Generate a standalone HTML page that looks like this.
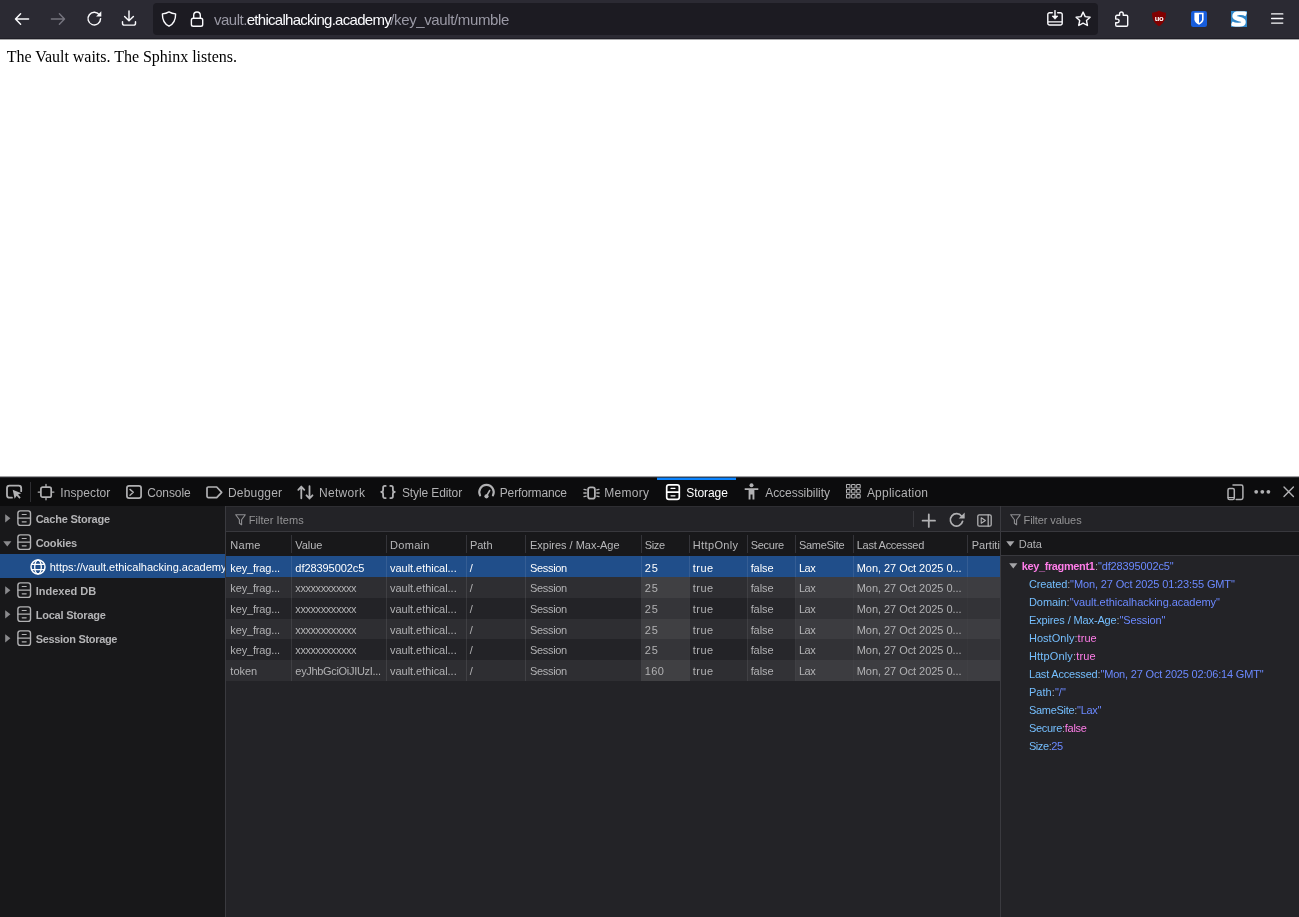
<!DOCTYPE html>
<html lang="en"><head><meta charset="utf-8"><title>key_vault</title>
<style>
html,body{margin:0;padding:0}
body{width:1299px;height:917px;position:relative;overflow:hidden;background:#fff;font-family:"Liberation Sans",sans-serif}
.a{position:absolute}
svg{position:absolute;overflow:visible}
#texts{position:absolute;left:0;top:0;width:1299px;height:917px;will-change:transform}
#texts .t{position:absolute;white-space:pre;font-family:"Liberation Sans",sans-serif}
#chrome{left:0;top:0;width:1299px;height:39px;background:#2b2a33}
#chromeline{left:0;top:38px;width:1299px;height:1px;background:#1f1e26}
#urlbar{left:153px;top:3px;width:945px;height:32px;background:#1c1b22;border-radius:4px}
#dt{left:0;top:476px;width:1299px;height:441px;background:#232327}
#dttop{left:0;top:476px;width:1299px;height:1px;background:#a0a0a2}
#dttop2{left:0;top:477px;width:1299px;height:1px;background:#29292c}
#chromeline2{left:0;top:39px;width:1299px;height:1px;background:#a8a8aa}
#tabs{left:0;top:477px;width:1299px;height:29px;background:#0c0c0d}
#tabline{left:226px;top:506px;width:1073px;height:1px;background:#2e2e32}
#tabhl{left:657px;top:478px;width:78.5px;height:2px;background:#0a84ff}
#tabhl2{left:657px;top:477px;width:78.5px;height:1px;background:#0a84ff;opacity:.35}
#tree{left:0;top:506px;width:225px;height:411px;background:#18181a}
#treesel{left:0;top:554px;width:225px;height:24px;background:#204e8a}
.vsplit{top:506px;width:1px;height:411px;background:#3a3a3f}
.hline{height:1px;background:#38383d}
#thead{left:226px;top:532px;width:774px;height:24px;background:#18181a}
#dhead{left:1001px;top:532px;width:298px;height:23px;background:#161618}
.row{left:226px;width:774px}
.zeb{background:rgba(255,255,255,.05)}
.sel{background:#204e8a}
.ro{background:rgba(255,255,255,.085)}
.csep{width:1px;background:rgba(255,255,255,.09)}
.hsep{width:1px;background:#343439;top:535px;height:18px}

</style></head>
<body>
<div class="a" id="chrome"></div><div class="a" id="chromeline"></div><div class="a" id="urlbar"></div>
<svg style="left:14px;top:10.75px;" width="16" height="16" viewBox="0 0 16 16"><path d="M14.6 8H1.6M6.6 2.8L1.5 8l5.1 5.2" fill="none" stroke="#fbfbfe" stroke-width="1.45" stroke-linecap="round" stroke-linejoin="round"/></svg>
<svg style="left:49.6px;top:10.75px;" width="16" height="16" viewBox="0 0 16 16"><path d="M1.4 8h13M9.4 2.8L14.5 8l-5.1 5.2" fill="none" stroke="#75747e" stroke-width="1.45" stroke-linecap="round" stroke-linejoin="round"/></svg>
<svg style="left:86px;top:10.2px;" width="16" height="16" viewBox="0 0 16 16"><path d="M13.6 5.2A6.3 6.3 0 1 0 14.6 8.6" fill="none" stroke="#fbfbfe" stroke-width="1.45" stroke-linecap="round" stroke-linejoin="round"/><path d="M15.3 1.2v5.2h-5.2z" fill="#fbfbfe"/></svg>
<svg style="left:121.3px;top:10.3px;" width="16" height="16" viewBox="0 0 16 16"><path d="M8 1v9.6M3.6 6.4L8 10.8l4.4-4.400" fill="none" stroke="#fbfbfe" stroke-width="1.45" stroke-linecap="round" stroke-linejoin="round"/><path d="M1.5 11.8v1.4a1.9 1.9 0 0 0 1.9 1.900h9.2a1.900 1.900 0 0 0 1.900-1.900v-1.400" fill="none" stroke="#fbfbfe" stroke-width="1.45" stroke-linecap="round" stroke-linejoin="round"/></svg>
<svg style="left:161.3px;top:10.8px;" width="16" height="16" viewBox="0 0 16 16"><path d="M8 0.900C10.300 2.200 12.300 2.700 14.600 2.900C14.700 8.500 12.900 12.700 8 15.200C3.100 12.700 1.300 8.500 1.400 2.900C3.700 2.700 5.700 2.200 8 0.900z" fill="none" stroke="#fbfbfe" stroke-width="1.4" stroke-linecap="round" stroke-linejoin="round"/></svg>
<svg style="left:189px;top:10.5px;" width="16" height="16" viewBox="0 0 16 16"><rect x="2.400" y="7.300" width="11.300" height="8" rx="1.800" fill="none" stroke="#fbfbfe" stroke-width="1.4" stroke-linecap="round" stroke-linejoin="round"/><path d="M4.700 7.200V4.300a3.300 3.300 0 0 1 6.600 0v2.900" fill="none" stroke="#fbfbfe" stroke-width="1.4" stroke-linecap="round" stroke-linejoin="round"/></svg>
<svg style="left:1047px;top:10.4px;" width="16" height="16" viewBox="0 0 16 16"><path d="M5.300 2.700H2.600A1.800 1.800 0 0 0 .8 4.500v8.700A1.800 1.800 0 0 0 2.600 15h10.800a1.800 1.800 0 0 0 1.800-1.800V4.500a1.800 1.800 0 0 0-1.800-1.800h-2.700M.8 11.900h14.400" fill="none" stroke="#fbfbfe" stroke-width="1.4" stroke-linecap="round" stroke-linejoin="round"/><path d="M8 .6v6.200" fill="none" stroke="#fbfbfe" stroke-width="1.4" stroke-linecap="round" stroke-linejoin="round"/><path d="M5 6h6L8 9.300z" fill="#fbfbfe" stroke="#fbfbfe" stroke-width=".6" stroke-linejoin="round"/></svg>
<svg style="left:1075px;top:10.6px;" width="16" height="16" viewBox="0 0 16 16"><path d="M8.100 1.100l2.100 4.500 4.900.6-3.600 3.400.95 4.900L8.100 12.100 3.750 14.500l.95-4.900L1.100 6.200l4.900-.6z" fill="none" stroke="#fbfbfe" stroke-width="1.4" stroke-linecap="round" stroke-linejoin="round"/></svg>
<svg style="left:1114px;top:10.6px;" width="16" height="16" viewBox="0 0 16 16"><path d="M5.600 4.300V2.800a1.800 1.800 0 0 1 3.600 0v1.500h3.200a1.300 1.300 0 0 1 1.300 1.300v8.400a1.300 1.300 0 0 1-1.300 1.300H3a1.300 1.300 0 0 1-1.300-1.300v-2.300h1.600a1.800 1.800 0 0 0 0-3.600H1.700V5.600A1.300 1.300 0 0 1 3 4.300z" fill="none" stroke="#fbfbfe" stroke-width="1.4" stroke-linecap="round" stroke-linejoin="round"/></svg>
<svg style="left:1151px;top:10.3px;will-change:transform" width="16" height="17" viewBox="0 0 16 17"><path d="M8 .5C10.200 1.900 12.500 2.500 15 2.800C15 9 12.800 13.600 8 16.300C3.200 13.600 1 9 1 2.800C3.500 2.500 5.800 1.900 8 .5z" fill="#800000"/><text x="8.100" y="10.600" font-family="Liberation Sans, sans-serif" font-weight="700" font-size="7.600" fill="#fff" text-anchor="middle" letter-spacing="-.3">uo</text></svg>
<svg style="left:1191px;top:10.6px;" width="16" height="16" viewBox="0 0 16 16"><rect width="16" height="16" rx="2.200" fill="#175ddc"/><path d="M3.400 1.700h9.200v6.600c0 2.600-2.100 4.400-4.600 5.500-2.500-1.100-4.600-2.900-4.600-5.500z" fill="#fff"/><path d="M8 3.300h3v5c0 1.600-1.300 2.800-3 3.600z" fill="#175ddc"/></svg>
<svg style="left:1231px;top:10.6px;overflow:hidden" width="16" height="16" viewBox="0 0 16 16"><rect width="16" height="16" fill="#2f86c8"/><path d="M15.500 3.300C11.500 .8 3.600 1.200 3.500 5.200C3.400 8.800 12.600 7.200 12.600 10.900C12.600 14.400 4.500 14.800 .5 12.300" fill="none" stroke="#fff" stroke-width="4.400"/><path d="M0 0h16v16H0z" fill="none" stroke="#2f86c8" stroke-width=".7"/></svg>
<svg style="left:1270.8px;top:10px;" width="13" height="18" viewBox="0 0 13 18"><path d="M.6 3.900h11.200M.6 8.500h11.200M.6 13.100h11.200" fill="none" stroke="#fbfbfe" stroke-width="1.35" stroke-linecap="round" stroke-linejoin="round"/></svg>
<div class="a" id="dt"></div><div class="a" id="tabs"></div><div class="a" id="dttop"></div><div class="a" id="dttop2"></div><div class="a" id="chromeline2"></div>
<div class="a" id="tabhl"></div><div class="a" id="tabhl2"></div>
<div class="a" id="tree"></div><div class="a" id="tabline"></div><div class="a" id="treesel"></div>
<svg style="left:6px;top:484px;" width="17" height="16" viewBox="0 0 17 16"><path d="M6 13.700H3.500A2.500 2.500 0 0 1 1 11.200V4.200A2.500 2.500 0 0 1 3.500 1.700h9.200A2.500 2.500 0 0 1 15.200 4.200v3" fill="none" stroke="#b1b1b3" stroke-width="1.8" stroke-linecap="round" stroke-linejoin="round"/><path d="M6.700 5.800l1.900 8.900 2.100-2.900 2.700 2.900 1.300-1.200-2.700-2.900 3.300-1.400z" fill="#b1b1b3"/></svg>
<div class="a" style="left:30px;top:482px;width:1px;height:20px;background:#2e2e32"></div>
<svg style="left:38.3px;top:483.7px;" width="16" height="16" viewBox="0 0 16 16"><rect x="2.900" y="3.100" width="10.300" height="10.100" rx="1.800" fill="none" stroke="#b1b1b3" stroke-width="1.7" stroke-linecap="round" stroke-linejoin="round"/><path d="M8 .3v2.200M8 13.800v2M.2 8.100h2.100M13.800 8.100h2.100" fill="none" stroke="#b1b1b3" stroke-width="1.3" stroke-linecap="round" stroke-linejoin="round"/></svg>
<svg style="left:126px;top:484.8px;" width="16" height="14" viewBox="0 0 16 14"><rect x=".9" y=".9" width="14.200" height="12.200" rx="2.200" fill="none" stroke="#b1b1b3" stroke-width="1.7" stroke-linecap="round" stroke-linejoin="round"/><path d="M4 4.400l3.300 2.900L4 10.200" fill="none" stroke="#b1b1b3" stroke-width="1.4" stroke-linecap="round" stroke-linejoin="round"/></svg>
<svg style="left:206px;top:485.7px;" width="17" height="13" viewBox="0 0 17 13"><path d="M2.300 1h8.400l5 5.300-5 5.300H2.300A1.300 1.300 0 0 1 1 10.300V2.300A1.300 1.300 0 0 1 2.300 1z" fill="none" stroke="#b1b1b3" stroke-width="1.7" stroke-linecap="round" stroke-linejoin="round"/></svg>
<svg style="left:296.5px;top:484.5px;" width="17" height="15" viewBox="0 0 17 15"><path d="M4.300 13.300V1.700M1.300 4.800l3-3.200 3 3.200M12.500 1.200v12.200M9.500 10.300l3 3.200 3-3.200" fill="none" stroke="#b1b1b3" stroke-width="1.8" stroke-linecap="round" stroke-linejoin="round"/></svg>
<svg style="left:380.3px;top:485px;" width="16" height="14" viewBox="0 0 16 14"><path d="M5.700 .9H4.900A1.800 1.800 0 0 0 3.100 2.700v2.400c0 1-.8 1.800-1.900 1.900 1.100.1 1.900.9 1.900 1.900v2.400a1.800 1.800 0 0 0 1.800 1.800h.8M10.300 .9h.8a1.800 1.800 0 0 1 1.800 1.800v2.400c0 1 .8 1.800 1.900 1.900-1.100.1-1.900.9-1.900 1.900v2.400a1.800 1.800 0 0 1-1.800 1.800h-.8" fill="none" stroke="#b1b1b3" stroke-width="1.8" stroke-linecap="round" stroke-linejoin="round"/></svg>
<svg style="left:477.7px;top:483.5px;" width="17" height="15" viewBox="0 0 17 15"><path d="M2.100 11.400A7.200 7.200 0 1 1 14.900 11.400" fill="none" stroke="#b1b1b3" stroke-width="2.1" stroke-linecap="round" stroke-linejoin="round"/><circle cx="8.500" cy="12.300" r="2.100" fill="#b1b1b3"/><path d="M8.800 11.500l2.900-5" fill="none" stroke="#b1b1b3" stroke-width="1.5" stroke-linecap="round" stroke-linejoin="round"/></svg>
<svg style="left:582.5px;top:485.5px;" width="17" height="14" viewBox="0 0 17 14"><rect x="5.100" y="1.300" width="6.800" height="11.400" rx="2.200" fill="none" stroke="#b1b1b3" stroke-width="1.8" stroke-linecap="round" stroke-linejoin="round"/><path d="M1 3.400l2.200.5M.8 7h2.400M1 10.600l2.200-.5M16 3.400l-2.200.5M16.200 7h-2.400M16 10.600l-2.200-.5" fill="none" stroke="#b1b1b3" stroke-width="1.3" stroke-linecap="round" stroke-linejoin="round"/></svg>
<svg style="left:664.9px;top:483.7px;" width="16" height="17" viewBox="0 0 16 17"><rect x="1.700" y=".9" width="12.600" height="14.500" rx="2.200" fill="none" stroke="#ffffff" stroke-width="1.7" stroke-linecap="round" stroke-linejoin="round"/><path d="M1.700 8.100h12.600" fill="none" stroke="#ffffff" stroke-width="1.6" stroke-linecap="round" stroke-linejoin="round"/><path d="M6 4.300h4M6 11.800h4" fill="none" stroke="#ffffff" stroke-width="1.3" stroke-linecap="round" stroke-linejoin="round"/></svg>
<svg style="left:744px;top:483.4px;" width="15" height="17" viewBox="0 0 15 17"><circle cx="7.500" cy="2.300" r="2" fill="#b1b1b3"/><path d="M.7 5.200h13.600v1.900H10.400v9.300H8.500v-4.900H6.500v4.900H4.600V7.100H.7z" fill="#b1b1b3"/></svg>
<svg style="left:845.7px;top:484.2px;" width="15" height="15" viewBox="0 0 15 15"><rect x="0.5" y="0.5" width="3.500" height="3.500" rx=".5" fill="none" stroke="#b1b1b3" stroke-width="1.05" stroke-linecap="round" stroke-linejoin="round"/><rect x="0.5" y="5.5" width="3.500" height="3.500" rx=".5" fill="none" stroke="#b1b1b3" stroke-width="1.05" stroke-linecap="round" stroke-linejoin="round"/><rect x="0.5" y="10.5" width="3.500" height="3.500" rx=".5" fill="none" stroke="#b1b1b3" stroke-width="1.05" stroke-linecap="round" stroke-linejoin="round"/><rect x="5.6" y="0.5" width="3.500" height="3.500" rx=".5" fill="none" stroke="#b1b1b3" stroke-width="1.05" stroke-linecap="round" stroke-linejoin="round"/><rect x="5.6" y="5.5" width="3.500" height="3.500" rx=".5" fill="none" stroke="#b1b1b3" stroke-width="1.05" stroke-linecap="round" stroke-linejoin="round"/><rect x="5.6" y="10.5" width="3.500" height="3.500" rx=".5" fill="none" stroke="#b1b1b3" stroke-width="1.05" stroke-linecap="round" stroke-linejoin="round"/><rect x="10.7" y="0.5" width="3.500" height="3.500" rx=".5" fill="none" stroke="#b1b1b3" stroke-width="1.05" stroke-linecap="round" stroke-linejoin="round"/><rect x="10.7" y="5.5" width="3.500" height="3.500" rx=".5" fill="none" stroke="#b1b1b3" stroke-width="1.05" stroke-linecap="round" stroke-linejoin="round"/><rect x="10.7" y="10.5" width="3.500" height="3.500" rx=".5" fill="none" stroke="#b1b1b3" stroke-width="1.05" stroke-linecap="round" stroke-linejoin="round"/></svg>
<svg style="left:1226.8px;top:483.7px;" width="17" height="17" viewBox="0 0 17 17"><path d="M6 1.100h8.200a1.700 1.700 0 0 1 1.700 1.700v11a1.700 1.700 0 0 1-1.700 1.700H9.200" fill="none" stroke="#b1b1b3" stroke-width="1.5" stroke-linecap="round" stroke-linejoin="round"/><rect x="1" y="4.500" width="6.300" height="11" rx="1.500" fill="none" stroke="#b1b1b3" stroke-width="1.5" stroke-linecap="round" stroke-linejoin="round"/><path d="M1 13.500h6.300" fill="none" stroke="#b1b1b3" stroke-width="1" stroke-linecap="round" stroke-linejoin="round"/></svg>
<svg style="left:1254px;top:489px" width="17" height="6"><circle cx="2.200" cy="2.800" r="1.900" fill="#b1b1b3"/><circle cx="8.300" cy="2.800" r="1.900" fill="#b1b1b3"/><circle cx="14.400" cy="2.800" r="1.900" fill="#b1b1b3"/></svg>
<svg style="left:1282.5px;top:486px;" width="12" height="12" viewBox="0 0 12 12"><path d="M1 1l9.400 9.400M10.400 1L1 10.400" fill="none" stroke="#b1b1b3" stroke-width="1.4" stroke-linecap="round" stroke-linejoin="round"/></svg>
<svg style="left:5.1px;top:514.3px;" width="6" height="9" viewBox="0 0 6 9"><path d="M.2 .2L5.400 4.300.2 8.400z" fill="#8a8a8d"/></svg>
<svg style="left:16.8px;top:510.2px;" width="15" height="17" viewBox="0 0 15 17"><rect x=".9" y=".9" width="12.600" height="14.500" rx="2.400" fill="none" stroke="#b1b1b3" stroke-width="1.4" stroke-linecap="round" stroke-linejoin="round"/><path d="M.9 8.100h12.600" fill="none" stroke="#b1b1b3" stroke-width="1.3" stroke-linecap="round" stroke-linejoin="round"/><path d="M5.200 4.500h4M5.200 11.800h4" fill="none" stroke="#b1b1b3" stroke-width="1.2" stroke-linecap="round" stroke-linejoin="round"/></svg>
<svg style="left:3px;top:540.7px;" width="9" height="6" viewBox="0 0 9 6"><path d="M.2 .2h8.200L4.300 5.400z" fill="#8a8a8d"/></svg>
<svg style="left:16.8px;top:534.2px;" width="15" height="17" viewBox="0 0 15 17"><rect x=".9" y=".9" width="12.600" height="14.500" rx="2.400" fill="none" stroke="#b1b1b3" stroke-width="1.4" stroke-linecap="round" stroke-linejoin="round"/><path d="M.9 8.100h12.600" fill="none" stroke="#b1b1b3" stroke-width="1.3" stroke-linecap="round" stroke-linejoin="round"/><path d="M5.200 4.500h4M5.200 11.800h4" fill="none" stroke="#b1b1b3" stroke-width="1.2" stroke-linecap="round" stroke-linejoin="round"/></svg>
<svg style="left:5.1px;top:586.3px;" width="6" height="9" viewBox="0 0 6 9"><path d="M.2 .2L5.400 4.300.2 8.400z" fill="#8a8a8d"/></svg>
<svg style="left:16.8px;top:582.2px;" width="15" height="17" viewBox="0 0 15 17"><rect x=".9" y=".9" width="12.600" height="14.500" rx="2.400" fill="none" stroke="#b1b1b3" stroke-width="1.4" stroke-linecap="round" stroke-linejoin="round"/><path d="M.9 8.100h12.600" fill="none" stroke="#b1b1b3" stroke-width="1.3" stroke-linecap="round" stroke-linejoin="round"/><path d="M5.200 4.500h4M5.200 11.800h4" fill="none" stroke="#b1b1b3" stroke-width="1.2" stroke-linecap="round" stroke-linejoin="round"/></svg>
<svg style="left:5.1px;top:610.3px;" width="6" height="9" viewBox="0 0 6 9"><path d="M.2 .2L5.400 4.300.2 8.400z" fill="#8a8a8d"/></svg>
<svg style="left:16.8px;top:606.2px;" width="15" height="17" viewBox="0 0 15 17"><rect x=".9" y=".9" width="12.600" height="14.500" rx="2.400" fill="none" stroke="#b1b1b3" stroke-width="1.4" stroke-linecap="round" stroke-linejoin="round"/><path d="M.9 8.100h12.600" fill="none" stroke="#b1b1b3" stroke-width="1.3" stroke-linecap="round" stroke-linejoin="round"/><path d="M5.200 4.500h4M5.200 11.800h4" fill="none" stroke="#b1b1b3" stroke-width="1.2" stroke-linecap="round" stroke-linejoin="round"/></svg>
<svg style="left:5.1px;top:634.3px;" width="6" height="9" viewBox="0 0 6 9"><path d="M.2 .2L5.400 4.300.2 8.400z" fill="#8a8a8d"/></svg>
<svg style="left:16.8px;top:630.2px;" width="15" height="17" viewBox="0 0 15 17"><rect x=".9" y=".9" width="12.600" height="14.500" rx="2.400" fill="none" stroke="#b1b1b3" stroke-width="1.4" stroke-linecap="round" stroke-linejoin="round"/><path d="M.9 8.100h12.600" fill="none" stroke="#b1b1b3" stroke-width="1.3" stroke-linecap="round" stroke-linejoin="round"/><path d="M5.200 4.500h4M5.200 11.800h4" fill="none" stroke="#b1b1b3" stroke-width="1.2" stroke-linecap="round" stroke-linejoin="round"/></svg>
<svg style="left:30px;top:558.7px;" width="16" height="16" viewBox="0 0 16 16"><circle cx="8" cy="8" r="7" fill="none" stroke="#ffffff" stroke-width="1.5" stroke-linecap="round" stroke-linejoin="round"/><ellipse cx="8" cy="8" rx="3.300" ry="7" fill="none" stroke="#ffffff" stroke-width="1.3" stroke-linecap="round" stroke-linejoin="round"/><path d="M1.600 5.300h12.800M1.600 10.700h12.800" fill="none" stroke="#ffffff" stroke-width="1.3" stroke-linecap="round" stroke-linejoin="round"/></svg>
<div class="a vsplit" style="left:225px"></div><div class="a vsplit" style="left:1000px"></div>
<div class="a hline" style="left:226px;top:531px;width:1073px"></div>
<div class="a" id="thead"></div><div class="a" id="dhead"></div>
<div class="a hline" style="left:1001px;top:555px;width:298px"></div>
<div class="a row sel" style="top:556px;height:21px"></div>
<div class="a row zeb" style="top:577px;height:21px"></div>
<div class="a row zeb" style="top:619px;height:20px"></div>
<div class="a row zeb" style="top:660px;height:21px"></div>
<div class="a" style="left:642px;top:577px;width:47px;height:104px;background:rgba(255,255,255,0.085)"></div>
<div class="a" style="left:748px;top:577px;width:47px;height:104px;background:rgba(255,255,255,0.02)"></div>
<div class="a" style="left:796px;top:577px;width:57px;height:104px;background:rgba(255,255,255,0.07)"></div>
<div class="a" style="left:854px;top:577px;width:113px;height:104px;background:rgba(255,255,255,0.075)"></div>
<div class="a" style="left:968px;top:577px;width:32px;height:104px;background:rgba(255,255,255,0.075)"></div>
<div class="a csep" style="left:291px;top:556px;height:125px"></div>
<div class="a hsep" style="left:291px"></div>
<div class="a csep" style="left:386px;top:556px;height:125px"></div>
<div class="a hsep" style="left:386px"></div>
<div class="a csep" style="left:466px;top:556px;height:125px"></div>
<div class="a hsep" style="left:466px"></div>
<div class="a csep" style="left:525px;top:556px;height:125px"></div>
<div class="a hsep" style="left:525px"></div>
<div class="a csep" style="left:641px;top:556px;height:125px"></div>
<div class="a hsep" style="left:641px"></div>
<div class="a csep" style="left:689px;top:556px;height:125px"></div>
<div class="a hsep" style="left:689px"></div>
<div class="a csep" style="left:747px;top:556px;height:125px"></div>
<div class="a hsep" style="left:747px"></div>
<div class="a csep" style="left:795px;top:556px;height:125px"></div>
<div class="a hsep" style="left:795px"></div>
<div class="a csep" style="left:853px;top:556px;height:125px"></div>
<div class="a hsep" style="left:853px"></div>
<div class="a csep" style="left:967px;top:556px;height:125px"></div>
<div class="a hsep" style="left:967px"></div>
<div class="a" style="left:913px;top:511px;width:1px;height:16px;background:#38383d"></div>
<svg style="left:921px;top:512.5px;" width="16" height="16" viewBox="0 0 16 16"><path d="M7.800 1.500v12.400M1.600 7.700h12.400" fill="none" stroke="#b1b1b3" stroke-width="1.8" stroke-linecap="round" stroke-linejoin="round"/></svg>
<svg style="left:949px;top:512.3px;" width="17" height="16" viewBox="0 0 17 16"><path d="M13.600 9.300A6.200 6.200 0 1 1 12.600 4.300" fill="none" stroke="#b1b1b3" stroke-width="1.7" stroke-linecap="round" stroke-linejoin="round"/><path d="M15.700 .6v6h-6z" fill="#b1b1b3"/></svg>
<svg style="left:977px;top:513.5px;" width="15" height="13" viewBox="0 0 15 13"><rect x=".8" y=".8" width="13.400" height="11.400" rx="1.500" fill="none" stroke="#b1b1b3" stroke-width="1.3" stroke-linecap="round" stroke-linejoin="round"/><path d="M11.200 .8v11.400" fill="none" stroke="#b1b1b3" stroke-width="1.3" stroke-linecap="round" stroke-linejoin="round"/><path d="M4.200 3.700l4.200 2.800-4.200 2.800z" fill="none" stroke="#b1b1b3" stroke-width="1.1" stroke-linecap="round" stroke-linejoin="round"/></svg>
<svg style="left:235px;top:513.8px;" width="11" height="12" viewBox="0 0 11 12"><path d="M.7 .7h9.600L6.600 5.800v4.900L4.400 9.200V5.800z" fill="none" stroke="#8f8f92" stroke-width="1.1" stroke-linecap="round" stroke-linejoin="round"/></svg>
<svg style="left:1010px;top:513.6px;" width="11" height="12" viewBox="0 0 11 12"><path d="M.7 .7h9.600L6.600 5.800v4.900L4.400 9.200V5.800z" fill="none" stroke="#8f8f92" stroke-width="1.1" stroke-linecap="round" stroke-linejoin="round"/></svg>
<svg style="left:1006px;top:541px;" width="9" height="6" viewBox="0 0 9 6"><path d="M.2 .3h8.200L4.300 5.400z" fill="#a5a5a8"/></svg>
<svg style="left:1009px;top:562.7px;" width="9" height="6" viewBox="0 0 9 6"><path d="M.2 .3h8.200L4.300 5.400z" fill="#a5a5a8"/></svg>
<div id="texts">
<span class="t" style="left:6.68px;top:48px;font-size:16px;line-height:17px;height:17px;color:#000;font-family:'Liberation Serif', serif;letter-spacing:-0.02px;">The Vault waits. The Sphinx listens.</span>
<span class="t" style="left:213.9px;top:11px;font-size:15px;line-height:17px;height:17px;color:#9a99a5;letter-spacing:-0.45px;">vault.</span>
<span class="t" style="left:246.7px;top:11px;font-size:15px;line-height:17px;height:17px;color:#fbfbfe;letter-spacing:-0.72px;">ethicalhacking.academy</span>
<span class="t" style="left:390.3px;top:11px;font-size:15px;line-height:17px;height:17px;color:#9a99a5;letter-spacing:-0.38px;">/key_vault/mumble</span>
<span class="t" style="left:60.28px;top:486px;font-size:12px;line-height:14px;height:14px;color:#b1b1b3;letter-spacing:0.09px;">Inspector</span>
<span class="t" style="left:147.18px;top:486px;font-size:12px;line-height:14px;height:14px;color:#b1b1b3;letter-spacing:-0.08px;">Console</span>
<span class="t" style="left:227.98px;top:486px;font-size:12px;line-height:14px;height:14px;color:#b1b1b3;letter-spacing:0.19px;">Debugger</span>
<span class="t" style="left:318.88px;top:486px;font-size:12px;line-height:14px;height:14px;color:#b1b1b3;letter-spacing:0.34px;">Network</span>
<span class="t" style="left:401.88px;top:486px;font-size:12px;line-height:14px;height:14px;color:#b1b1b3;letter-spacing:-0.1px;">Style Editor</span>
<span class="t" style="left:499.78px;top:486px;font-size:12px;line-height:14px;height:14px;color:#b1b1b3;letter-spacing:-0.15px;">Performance</span>
<span class="t" style="left:604.28px;top:486px;font-size:12px;line-height:14px;height:14px;color:#b1b1b3;letter-spacing:0.26px;">Memory</span>
<span class="t" style="left:686.28px;top:486px;font-size:12px;line-height:14px;height:14px;color:#ffffff;letter-spacing:-0.07px;">Storage</span>
<span class="t" style="left:765.18px;top:486px;font-size:12px;line-height:14px;height:14px;color:#b1b1b3;letter-spacing:-0.04px;">Accessibility</span>
<span class="t" style="left:866.88px;top:486px;font-size:12px;line-height:14px;height:14px;color:#b1b1b3;letter-spacing:0.24px;">Application</span>
<span class="t" style="left:35.64px;top:513px;font-size:11px;line-height:12px;height:12px;color:#b4b4b6;font-weight:700;letter-spacing:-0.21px;">Cache Storage</span>
<span class="t" style="left:35.64px;top:537px;font-size:11px;line-height:12px;height:12px;color:#b4b4b6;font-weight:700;letter-spacing:-0.21px;">Cookies</span>
<span class="t" style="left:49.74px;top:561px;font-size:11px;line-height:12px;height:12px;color:#ffffff;width:175.26px;overflow:hidden;">https://vault.ethicalhacking.academy</span>
<span class="t" style="left:35.64px;top:585px;font-size:11px;line-height:12px;height:12px;color:#b4b4b6;font-weight:700;letter-spacing:0.01px;">Indexed DB</span>
<span class="t" style="left:35.64px;top:609px;font-size:11px;line-height:12px;height:12px;color:#b4b4b6;font-weight:700;letter-spacing:-0.2px;">Local Storage</span>
<span class="t" style="left:35.64px;top:633px;font-size:11px;line-height:12px;height:12px;color:#b4b4b6;font-weight:700;letter-spacing:-0.31px;">Session Storage</span>
<span class="t" style="left:248.74px;top:514px;font-size:11px;line-height:12px;height:12px;color:#939395;letter-spacing:0.05px;">Filter Items</span>
<span class="t" style="left:1023.54px;top:514px;font-size:11px;line-height:12px;height:12px;color:#939395;letter-spacing:-0.1px;">Filter values</span>
<span class="t" style="left:230.34px;top:539px;font-size:11px;line-height:12px;height:12px;color:#b8b8ba;letter-spacing:0.26px;">Name</span>
<span class="t" style="left:295.34px;top:539px;font-size:11px;line-height:12px;height:12px;color:#b8b8ba;letter-spacing:-0.08px;">Value</span>
<span class="t" style="left:390.04px;top:539px;font-size:11px;line-height:12px;height:12px;color:#b8b8ba;letter-spacing:0.3px;">Domain</span>
<span class="t" style="left:469.94px;top:539px;font-size:11px;line-height:12px;height:12px;color:#b8b8ba;letter-spacing:-0.01px;">Path</span>
<span class="t" style="left:530.04px;top:539px;font-size:11px;line-height:12px;height:12px;color:#b8b8ba;letter-spacing:-0.02px;">Expires / Max-Age</span>
<span class="t" style="left:644.84px;top:539px;font-size:11px;line-height:12px;height:12px;color:#b8b8ba;letter-spacing:-0.4px;">Size</span>
<span class="t" style="left:692.84px;top:539px;font-size:11px;line-height:12px;height:12px;color:#b8b8ba;letter-spacing:0.35px;">HttpOnly</span>
<span class="t" style="left:750.64px;top:539px;font-size:11px;line-height:12px;height:12px;color:#b8b8ba;letter-spacing:-0.25px;">Secure</span>
<span class="t" style="left:798.94px;top:539px;font-size:11px;line-height:12px;height:12px;color:#b8b8ba;letter-spacing:-0.28px;">SameSite</span>
<span class="t" style="left:856.74px;top:539px;font-size:11px;line-height:12px;height:12px;color:#b8b8ba;letter-spacing:-0.28px;">Last Accessed</span>
<span class="t" style="left:971.74px;top:539px;font-size:11px;line-height:12px;height:12px;color:#b8b8ba;width:28.26px;overflow:hidden;">Partition Key</span>
<span class="t" style="left:230.34px;top:562px;font-size:11px;line-height:12px;height:12px;color:#ffffff;letter-spacing:-0.16px;">key_frag...</span>
<span class="t" style="left:295.34px;top:562px;font-size:11px;line-height:12px;height:12px;color:#ffffff;letter-spacing:-0.06px;">df28395002c5</span>
<span class="t" style="left:390.04px;top:562px;font-size:11px;line-height:12px;height:12px;color:#ffffff;letter-spacing:-0.04px;">vault.ethical...</span>
<span class="t" style="left:469.64px;top:562px;font-size:11px;line-height:12px;height:12px;color:#ffffff;">/</span>
<span class="t" style="left:530.04px;top:562px;font-size:11px;line-height:12px;height:12px;color:#ffffff;letter-spacing:-0.34px;">Session</span>
<span class="t" style="left:644.84px;top:562px;font-size:11px;line-height:12px;height:12px;color:#ffffff;letter-spacing:0.77px;">25</span>
<span class="t" style="left:692.84px;top:562px;font-size:11px;line-height:12px;height:12px;color:#ffffff;letter-spacing:0.48px;">true</span>
<span class="t" style="left:750.64px;top:562px;font-size:11px;line-height:12px;height:12px;color:#ffffff;letter-spacing:-0.06px;">false</span>
<span class="t" style="left:798.94px;top:562px;font-size:11px;line-height:12px;height:12px;color:#ffffff;letter-spacing:-0.52px;">Lax</span>
<span class="t" style="left:856.74px;top:562px;font-size:11px;line-height:12px;height:12px;color:#ffffff;letter-spacing:-0.05px;">Mon, 27 Oct 2025 0...</span>
<span class="t" style="left:230.34px;top:582px;font-size:11px;line-height:12px;height:12px;color:#b1b1b3;letter-spacing:-0.16px;">key_frag...</span>
<span class="t" style="left:295.34px;top:582px;font-size:11px;line-height:12px;height:12px;color:#b1b1b3;letter-spacing:-0.43px;">xxxxxxxxxxxx</span>
<span class="t" style="left:390.04px;top:582px;font-size:11px;line-height:12px;height:12px;color:#b1b1b3;letter-spacing:-0.04px;">vault.ethical...</span>
<span class="t" style="left:469.64px;top:582px;font-size:11px;line-height:12px;height:12px;color:#b1b1b3;">/</span>
<span class="t" style="left:530.04px;top:582px;font-size:11px;line-height:12px;height:12px;color:#b1b1b3;letter-spacing:-0.34px;">Session</span>
<span class="t" style="left:644.84px;top:582px;font-size:11px;line-height:12px;height:12px;color:#b1b1b3;letter-spacing:0.77px;">25</span>
<span class="t" style="left:692.84px;top:582px;font-size:11px;line-height:12px;height:12px;color:#b1b1b3;letter-spacing:0.48px;">true</span>
<span class="t" style="left:750.64px;top:582px;font-size:11px;line-height:12px;height:12px;color:#b1b1b3;letter-spacing:-0.06px;">false</span>
<span class="t" style="left:798.94px;top:582px;font-size:11px;line-height:12px;height:12px;color:#b1b1b3;letter-spacing:-0.52px;">Lax</span>
<span class="t" style="left:856.74px;top:582px;font-size:11px;line-height:12px;height:12px;color:#b1b1b3;letter-spacing:-0.05px;">Mon, 27 Oct 2025 0...</span>
<span class="t" style="left:230.34px;top:603px;font-size:11px;line-height:12px;height:12px;color:#b1b1b3;letter-spacing:-0.16px;">key_frag...</span>
<span class="t" style="left:295.34px;top:603px;font-size:11px;line-height:12px;height:12px;color:#b1b1b3;letter-spacing:-0.43px;">xxxxxxxxxxxx</span>
<span class="t" style="left:390.04px;top:603px;font-size:11px;line-height:12px;height:12px;color:#b1b1b3;letter-spacing:-0.04px;">vault.ethical...</span>
<span class="t" style="left:469.64px;top:603px;font-size:11px;line-height:12px;height:12px;color:#b1b1b3;">/</span>
<span class="t" style="left:530.04px;top:603px;font-size:11px;line-height:12px;height:12px;color:#b1b1b3;letter-spacing:-0.34px;">Session</span>
<span class="t" style="left:644.84px;top:603px;font-size:11px;line-height:12px;height:12px;color:#b1b1b3;letter-spacing:0.77px;">25</span>
<span class="t" style="left:692.84px;top:603px;font-size:11px;line-height:12px;height:12px;color:#b1b1b3;letter-spacing:0.48px;">true</span>
<span class="t" style="left:750.64px;top:603px;font-size:11px;line-height:12px;height:12px;color:#b1b1b3;letter-spacing:-0.06px;">false</span>
<span class="t" style="left:798.94px;top:603px;font-size:11px;line-height:12px;height:12px;color:#b1b1b3;letter-spacing:-0.52px;">Lax</span>
<span class="t" style="left:856.74px;top:603px;font-size:11px;line-height:12px;height:12px;color:#b1b1b3;letter-spacing:-0.05px;">Mon, 27 Oct 2025 0...</span>
<span class="t" style="left:230.34px;top:624px;font-size:11px;line-height:12px;height:12px;color:#b1b1b3;letter-spacing:-0.16px;">key_frag...</span>
<span class="t" style="left:295.34px;top:624px;font-size:11px;line-height:12px;height:12px;color:#b1b1b3;letter-spacing:-0.43px;">xxxxxxxxxxxx</span>
<span class="t" style="left:390.04px;top:624px;font-size:11px;line-height:12px;height:12px;color:#b1b1b3;letter-spacing:-0.04px;">vault.ethical...</span>
<span class="t" style="left:469.64px;top:624px;font-size:11px;line-height:12px;height:12px;color:#b1b1b3;">/</span>
<span class="t" style="left:530.04px;top:624px;font-size:11px;line-height:12px;height:12px;color:#b1b1b3;letter-spacing:-0.34px;">Session</span>
<span class="t" style="left:644.84px;top:624px;font-size:11px;line-height:12px;height:12px;color:#b1b1b3;letter-spacing:0.77px;">25</span>
<span class="t" style="left:692.84px;top:624px;font-size:11px;line-height:12px;height:12px;color:#b1b1b3;letter-spacing:0.48px;">true</span>
<span class="t" style="left:750.64px;top:624px;font-size:11px;line-height:12px;height:12px;color:#b1b1b3;letter-spacing:-0.06px;">false</span>
<span class="t" style="left:798.94px;top:624px;font-size:11px;line-height:12px;height:12px;color:#b1b1b3;letter-spacing:-0.52px;">Lax</span>
<span class="t" style="left:856.74px;top:624px;font-size:11px;line-height:12px;height:12px;color:#b1b1b3;letter-spacing:-0.05px;">Mon, 27 Oct 2025 0...</span>
<span class="t" style="left:230.34px;top:644px;font-size:11px;line-height:12px;height:12px;color:#b1b1b3;letter-spacing:-0.16px;">key_frag...</span>
<span class="t" style="left:295.34px;top:644px;font-size:11px;line-height:12px;height:12px;color:#b1b1b3;letter-spacing:-0.43px;">xxxxxxxxxxxx</span>
<span class="t" style="left:390.04px;top:644px;font-size:11px;line-height:12px;height:12px;color:#b1b1b3;letter-spacing:-0.04px;">vault.ethical...</span>
<span class="t" style="left:469.64px;top:644px;font-size:11px;line-height:12px;height:12px;color:#b1b1b3;">/</span>
<span class="t" style="left:530.04px;top:644px;font-size:11px;line-height:12px;height:12px;color:#b1b1b3;letter-spacing:-0.34px;">Session</span>
<span class="t" style="left:644.84px;top:644px;font-size:11px;line-height:12px;height:12px;color:#b1b1b3;letter-spacing:0.77px;">25</span>
<span class="t" style="left:692.84px;top:644px;font-size:11px;line-height:12px;height:12px;color:#b1b1b3;letter-spacing:0.48px;">true</span>
<span class="t" style="left:750.64px;top:644px;font-size:11px;line-height:12px;height:12px;color:#b1b1b3;letter-spacing:-0.06px;">false</span>
<span class="t" style="left:798.94px;top:644px;font-size:11px;line-height:12px;height:12px;color:#b1b1b3;letter-spacing:-0.52px;">Lax</span>
<span class="t" style="left:856.74px;top:644px;font-size:11px;line-height:12px;height:12px;color:#b1b1b3;letter-spacing:-0.05px;">Mon, 27 Oct 2025 0...</span>
<span class="t" style="left:230.34px;top:665px;font-size:11px;line-height:12px;height:12px;color:#b1b1b3;">token</span>
<span class="t" style="left:295.34px;top:665px;font-size:11px;line-height:12px;height:12px;color:#b1b1b3;letter-spacing:-0.32px;">eyJhbGciOiJIUzI...</span>
<span class="t" style="left:390.04px;top:665px;font-size:11px;line-height:12px;height:12px;color:#b1b1b3;letter-spacing:-0.04px;">vault.ethical...</span>
<span class="t" style="left:469.64px;top:665px;font-size:11px;line-height:12px;height:12px;color:#b1b1b3;">/</span>
<span class="t" style="left:530.04px;top:665px;font-size:11px;line-height:12px;height:12px;color:#b1b1b3;letter-spacing:-0.34px;">Session</span>
<span class="t" style="left:644.84px;top:665px;font-size:11px;line-height:12px;height:12px;color:#b1b1b3;letter-spacing:0.33px;">160</span>
<span class="t" style="left:692.84px;top:665px;font-size:11px;line-height:12px;height:12px;color:#b1b1b3;letter-spacing:0.48px;">true</span>
<span class="t" style="left:750.64px;top:665px;font-size:11px;line-height:12px;height:12px;color:#b1b1b3;letter-spacing:-0.06px;">false</span>
<span class="t" style="left:798.94px;top:665px;font-size:11px;line-height:12px;height:12px;color:#b1b1b3;letter-spacing:-0.52px;">Lax</span>
<span class="t" style="left:856.74px;top:665px;font-size:11px;line-height:12px;height:12px;color:#b1b1b3;letter-spacing:-0.05px;">Mon, 27 Oct 2025 0...</span>
<span class="t" style="left:1018.74px;top:538px;font-size:11px;line-height:12px;height:12px;color:#b1b1b3;letter-spacing:-0.01px;">Data</span>
<span class="t" style="left:1021.74px;top:560px;font-size:11px;line-height:12px;height:12px;color:#ff7de9;font-weight:700;letter-spacing:-0.38px;">key_fragment1</span>
<span class="t" style="left:1094.94px;top:560px;font-size:11px;line-height:12px;height:12px;color:#b1b1b3;letter-spacing:-0.13px;"><span style="color:#a4a4ac">:</span><span style="color:#6b89ff">&quot;df28395002c5&quot;</span></span>
<span class="t" style="left:1028.94px;top:578px;font-size:11px;line-height:12px;height:12px;color:#b1b1b3;letter-spacing:-0.13px;"><span style="color:#75bfff">Created</span><span style="color:#a4a4ac">:</span><span style="color:#6b89ff">&quot;Mon, 27 Oct 2025 01:23:55 GMT&quot;</span></span>
<span class="t" style="left:1028.94px;top:596px;font-size:11px;line-height:12px;height:12px;color:#b1b1b3;letter-spacing:-0.04px;"><span style="color:#75bfff">Domain</span><span style="color:#a4a4ac">:</span><span style="color:#6b89ff">&quot;vault.ethicalhacking.academy&quot;</span></span>
<span class="t" style="left:1028.94px;top:614px;font-size:11px;line-height:12px;height:12px;color:#b1b1b3;letter-spacing:-0.13px;"><span style="color:#75bfff">Expires / Max-Age</span><span style="color:#a4a4ac">:</span><span style="color:#6b89ff">&quot;Session&quot;</span></span>
<span class="t" style="left:1028.94px;top:632px;font-size:11px;line-height:12px;height:12px;color:#b1b1b3;letter-spacing:0.04px;"><span style="color:#75bfff">HostOnly</span><span style="color:#a4a4ac">:</span><span style="color:#ff7de9">true</span></span>
<span class="t" style="left:1028.94px;top:650px;font-size:11px;line-height:12px;height:12px;color:#b1b1b3;letter-spacing:0.16px;"><span style="color:#75bfff">HttpOnly</span><span style="color:#a4a4ac">:</span><span style="color:#ff7de9">true</span></span>
<span class="t" style="left:1028.94px;top:668px;font-size:11px;line-height:12px;height:12px;color:#b1b1b3;letter-spacing:-0.18px;"><span style="color:#75bfff">Last Accessed</span><span style="color:#a4a4ac">:</span><span style="color:#6b89ff">&quot;Mon, 27 Oct 2025 02:06:14 GMT&quot;</span></span>
<span class="t" style="left:1028.94px;top:686px;font-size:11px;line-height:12px;height:12px;color:#b1b1b3;letter-spacing:0.05px;"><span style="color:#75bfff">Path</span><span style="color:#a4a4ac">:</span><span style="color:#6b89ff">&quot;/&quot;</span></span>
<span class="t" style="left:1028.94px;top:704px;font-size:11px;line-height:12px;height:12px;color:#b1b1b3;letter-spacing:-0.29px;"><span style="color:#75bfff">SameSite</span><span style="color:#a4a4ac">:</span><span style="color:#6b89ff">&quot;Lax&quot;</span></span>
<span class="t" style="left:1028.94px;top:722px;font-size:11px;line-height:12px;height:12px;color:#b1b1b3;letter-spacing:-0.29px;"><span style="color:#75bfff">Secure</span><span style="color:#a4a4ac">:</span><span style="color:#ff7de9">false</span></span>
<span class="t" style="left:1028.94px;top:740px;font-size:11px;line-height:12px;height:12px;color:#b1b1b3;letter-spacing:-0.43px;"><span style="color:#75bfff">Size</span><span style="color:#a4a4ac">:</span><span style="color:#6b89ff">25</span></span>
</div>
</body></html>
